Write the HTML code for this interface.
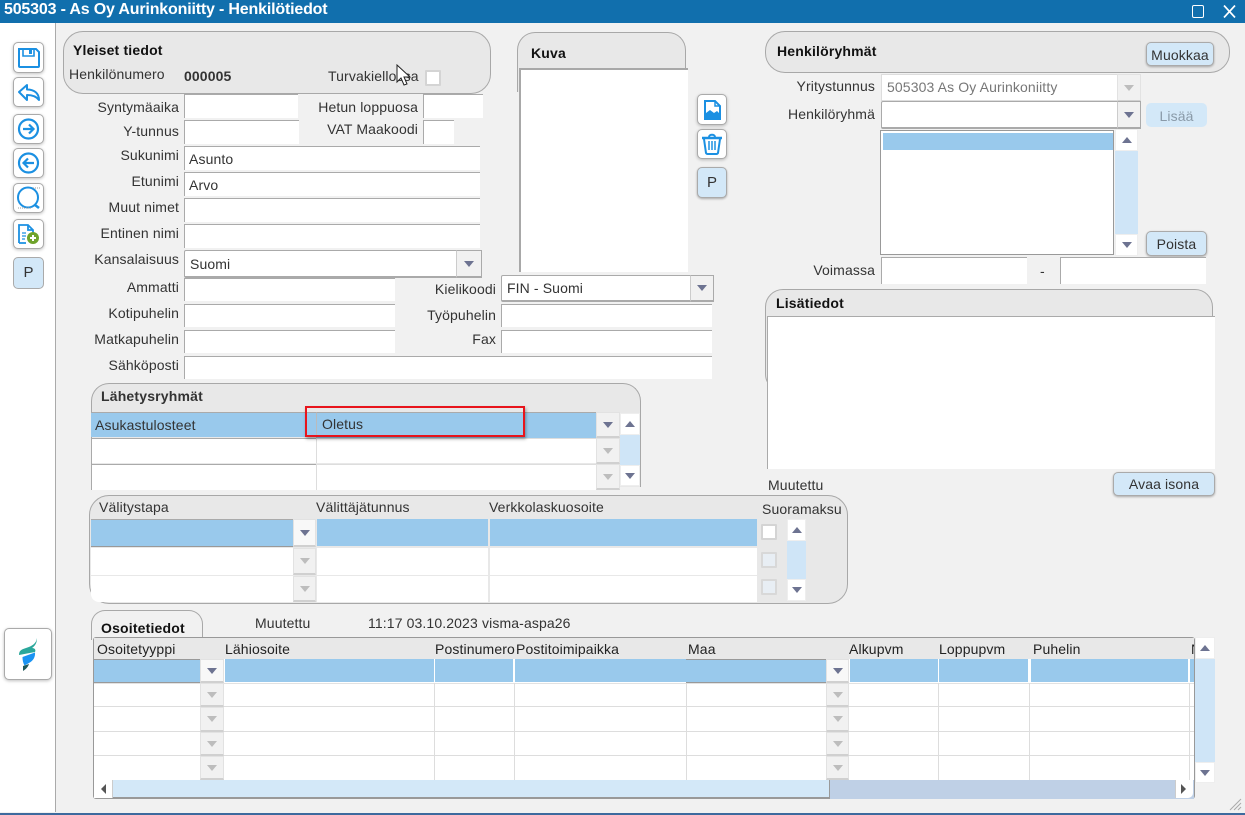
<!DOCTYPE html>
<html lang="fi"><head><meta charset="utf-8"><title>Henkilötiedot</title>
<style>
html,body{margin:0;padding:0;width:1245px;height:815px;overflow:hidden;background:#f1f1f1}
body{position:relative;font:14px/16px "Liberation Sans",Arial,sans-serif;color:#333;letter-spacing:.12px}
div,span.t,svg{position:absolute;box-sizing:border-box}
.t{white-space:nowrap;position:absolute}
.r{text-align:right}
.b{font-weight:bold;color:#111;letter-spacing:.18px}
.p{background:#e8e8e8;border:1px solid #a8a8a8}
.i{background:#fff;border-left:1px solid #aaa;border-top:1px solid #aaa}
.n{background:#fff;border-left:1px solid #ddd;border-top:1px solid #ddd}
.s{background:#99c9ec}
.btn{background:#fff;border:1px solid #aaa;border-radius:5px;box-shadow:0 1px 3px rgba(0,0,0,.25)}
.pb{background:#d3e8f8;border:1px solid #aaa;border-radius:5px;box-shadow:0 1px 2px rgba(0,0,0,.3);text-align:center;color:#333}
.dd{background:#f1f1f1;border:1px solid #e2e2e2;border-bottom:2px solid #d0d0d0}
.dn::after,.up::after,.dis::after{content:"";position:absolute;left:50%;top:50%;margin:-3px 0 0 -5px;border-left:5px solid transparent;border-right:5px solid transparent}
.dn::after{border-top:6px solid #6d7391}
.dis::after{border-top:6px solid #bdbdbd}
.up::after{border-bottom:6px solid #6d7391}
.sb{background:#fff;border:1px solid #eee}
.tr{background:#cfe5f7}
.ck{background:#fff;border:2px solid #d4d4d4;border-radius:1px}
.ck2{background:#e8eef4;border:2px solid #d8d8d8;border-radius:1px}
</style></head><body>

<!-- title bar -->
<div style="left:0;top:0;width:1245px;height:23px;background:#116fad"></div>
<span class="t" style="left:4px;top:1px;font-weight:bold;font-size:16px;line-height:18px;color:#fff;letter-spacing:-.18px">505303 - As Oy Aurinkoniitty - Henkilötiedot</span>
<div style="left:1192px;top:5px;width:12px;height:13px;border:1.500px solid #fff;border-radius:2px"></div>
<svg style="left:1223px;top:5px" width="13" height="13" viewBox="0 0 13 13"><path d="M1 .500L12 12.500M12 .500L1 12.500" stroke="#fff" stroke-width="1.700" fill="none"/></svg>

<!-- sidebar -->
<div style="left:0;top:23px;width:56px;height:789px;background:#fff;border-right:1px solid #aaa"></div>
<div style="left:0;top:813px;width:1245px;height:2px;background:#3d6a9e"></div>

<div class="btn" style="left:13px;top:42px;width:31px;height:31px"></div>
<svg style="left:13px;top:42px" width="31" height="31" viewBox="0 0 31 31" fill="none" stroke="#1b90e2" stroke-width="2"><path d="M6 7h17l3 3v14a1 1 0 0 1-1 1H7a1 1 0 0 1-1-1z"/><path d="M10 7v7h11V7" stroke-width="1.600"/><rect x="16" y="8" width="3" height="4" fill="#1b90e2" stroke="none"/></svg>
<div class="btn" style="left:13px;top:77px;width:31px;height:30px"></div>
<svg style="left:13px;top:77px" width="31" height="30" viewBox="0 0 31 30" fill="none" stroke="#1b90e2" stroke-width="2" stroke-linejoin="round"><path d="M6 15L14 8v4.500C21 12.500 26 16 26 23 23 19 19 18 14 18v5z"/></svg>
<div class="btn" style="left:13px;top:114px;width:31px;height:30px"></div>
<svg style="left:13px;top:114px" width="31" height="30" viewBox="0 0 31 30" fill="none" stroke="#1b90e2" stroke-width="2.200"><circle cx="15.500" cy="15" r="9.500"/><path d="M10 15h10M16 10.500l4.500 4.500-4.500 4.500"/></svg>
<div class="btn" style="left:13px;top:148px;width:31px;height:30px"></div>
<svg style="left:13px;top:148px" width="31" height="30" viewBox="0 0 31 30" fill="none" stroke="#1b90e2" stroke-width="2.200"><circle cx="15.500" cy="15" r="9.500"/><path d="M21 15H11M15 10.500L10.500 15l4.500 4.500"/></svg>
<div class="btn" style="left:13px;top:183px;width:31px;height:30px"></div>
<svg style="left:13px;top:183px" width="31" height="30" viewBox="0 0 31 30" fill="none" stroke="#1b90e2" stroke-width="2"><circle cx="15" cy="14.500" r="10"/><path d="M22 22l4 3" stroke-width="2.600"/><path d="M20 5h7M5 25h14" stroke="#999" stroke-width="1" stroke-dasharray="1 1"/></svg>
<div class="btn" style="left:13px;top:219px;width:31px;height:30px"></div>
<svg style="left:13px;top:219px" width="31" height="30" viewBox="0 0 31 30" fill="none"><path d="M6 24V6h9l5 5v3M6 24h7M15 6v5h5" stroke="#1b90e2" stroke-width="1.800"/><path d="M9 14h4M9 17h4M9 20h3" stroke="#1b90e2" stroke-width="1.200"/><circle cx="20" cy="19" r="6" fill="#6fa32b"/><path d="M17 19h6M20 16v6" stroke="#fff" stroke-width="2"/></svg>
<div class="pb" style="left:13px;top:257px;width:31px;height:32px;line-height:30px;font-size:15px;box-shadow:none">P</div>

<div class="btn" style="left:4px;top:628px;width:48px;height:52px"></div>
<svg style="left:4px;top:628px" width="48" height="52" viewBox="0 0 48 52"><path d="M33 10C32 16 28 18 22 20 18 21.500 15 22 15 27L31 24C32 22 31 20 28 20 31 18 33 15 33 10z" fill="#2aa79b"/><path d="M18.500 29L31 24.500C31.500 29 29 33 25 35L20.500 37.500C19 35 18.500 32 18.500 29z" fill="#1a93f2"/><path d="M19 38L25 36C24 39 22 41 19 43z" fill="#20585a"/></svg>

<!-- Yleiset tiedot -->
<div class="p" style="left:63px;top:31px;width:428px;height:63px;border-radius:20px"></div>
<span class="t b" style="left:73px;top:42px;font-size:14px">Yleiset tiedot</span>
<span class="t" style="left:69px;top:66px">Henkilönumero</span>
<span class="t" style="left:184px;top:68px;font-weight:bold">000005</span>
<span class="t" style="left:328px;top:68px">Turvakiellossa</span>
<div class="ck" style="left:425px;top:70px;width:16px;height:16px"></div>
<svg style="left:396px;top:64px" width="18" height="24" viewBox="0 0 18 24"><path d="M1 1v17l4-4 3 7 3-1-3-7h6z" fill="#fff" stroke="#222" stroke-width="1"/></svg>

<!-- left labels -->
<span class="t r" style="left:0;top:99px;width:179px">Syntymäaika</span>
<span class="t r" style="left:0;top:123px;width:179px">Y-tunnus</span>
<span class="t r" style="left:0;top:147px;width:179px">Sukunimi</span>
<span class="t r" style="left:0;top:173px;width:179px">Etunimi</span>
<span class="t r" style="left:0;top:199px;width:179px">Muut nimet</span>
<span class="t r" style="left:0;top:225px;width:179px">Entinen nimi</span>
<span class="t r" style="left:0;top:251px;width:179px">Kansalaisuus</span>
<span class="t r" style="left:0;top:279px;width:179px">Ammatti</span>
<span class="t r" style="left:0;top:305px;width:179px">Kotipuhelin</span>
<span class="t r" style="left:0;top:331px;width:179px">Matkapuhelin</span>
<span class="t r" style="left:0;top:357px;width:179px">Sähköposti</span>
<span class="t r" style="left:250px;top:99px;width:168px">Hetun loppuosa</span>
<span class="t r" style="left:250px;top:121px;width:168px">VAT Maakoodi</span>
<span class="t r" style="left:400px;top:281px;width:96px">Kielikoodi</span>
<span class="t r" style="left:400px;top:307px;width:96px">Työpuhelin</span>
<span class="t r" style="left:400px;top:331px;width:96px">Fax</span>

<!-- left fields -->
<div class="i" style="left:184px;top:94px;width:114px;height:24px"></div>
<div class="i" style="left:184px;top:120px;width:115px;height:24px"></div>
<div class="i" style="left:423px;top:94px;width:60px;height:24px"></div>
<div class="i" style="left:423px;top:120px;width:31px;height:24px"></div>
<div class="i" style="left:184px;top:146px;width:296px;height:24px"></div>
<span class="t" style="left:189px;top:151px">Asunto</span>
<div class="i" style="left:184px;top:172px;width:296px;height:24px"></div>
<span class="t" style="left:189px;top:177px">Arvo</span>
<div class="i" style="left:184px;top:198px;width:296px;height:24px"></div>
<div class="i" style="left:184px;top:224px;width:296px;height:24px"></div>
<div style="left:184px;top:250px;width:298px;height:28px;background:#fff;border:1px solid #aaa;border-bottom:2px solid #aaa;border-radius:2px"></div>
<span class="t" style="left:190px;top:256px">Suomi</span>
<div class="dd dn" style="left:456px;top:250px;width:26px;height:28px;border-color:#aaa;border-left-color:#ccc"></div>
<div class="i" style="left:184px;top:278px;width:211px;height:23px"></div>
<div class="i" style="left:184px;top:304px;width:211px;height:23px"></div>
<div class="i" style="left:184px;top:330px;width:211px;height:23px"></div>
<div class="i" style="left:184px;top:356px;width:528px;height:23px"></div>
<div style="left:501px;top:275px;width:213px;height:27px;background:#fff;border:1px solid #aaa;border-bottom:2px solid #aaa;border-radius:2px"></div>
<span class="t" style="left:507px;top:280px">FIN - Suomi</span>
<div class="dd dn" style="left:690px;top:275px;width:24px;height:27px;border-color:#aaa;border-left-color:#ccc"></div>
<div class="i" style="left:501px;top:304px;width:211px;height:23px"></div>
<div class="i" style="left:501px;top:330px;width:211px;height:23px"></div>

<!-- Kuva -->
<div class="p" style="left:517px;top:32px;width:169px;height:60px;border-radius:18px 18px 0 0;border-bottom:none"></div>
<span class="t b" style="left:531px;top:45px">Kuva</span>
<div style="left:519px;top:68px;width:169px;height:204px;background:#fff;border-left:2px solid #a8a8a8;border-top:2px solid #a8a8a8"></div>

<div class="btn" style="left:697px;top:94px;width:30px;height:31px"></div>
<svg style="left:697px;top:94px" width="30" height="31" viewBox="0 0 30 31" fill="none"><path d="M8 7h10l5 5v13H8z" stroke="#1b90e2" stroke-width="2"/><path d="M18 7v5h5" stroke="#1b90e2" stroke-width="1.500"/><path d="M9 24v-5l4-3 4 3 3-2 2 2v5z" fill="#1b90e2"/></svg>
<div class="btn" style="left:697px;top:129px;width:30px;height:30px"></div>
<svg style="left:697px;top:129px" width="30" height="30" viewBox="0 0 30 30" fill="none" stroke="#1b90e2" stroke-width="2"><path d="M5 9h20" stroke-width="2.500"/><path d="M12 8c0-3 6-3 6 0"/><path d="M7 10l2 14a2 2 0 0 0 2 1h8a2 2 0 0 0 2-1l2-14"/><path d="M12 12v9M15 12v9M18 12v9" stroke-width="1.500"/></svg>
<div class="pb" style="left:697px;top:167px;width:30px;height:31px;line-height:30px;font-size:15px">P</div>

<!-- Henkilöryhmät -->
<div class="p" style="left:765px;top:31px;width:465px;height:42px;border-radius:20px"></div>
<span class="t b" style="left:777px;top:43px">Henkilöryhmät</span>
<div class="pb" style="left:1146px;top:42px;width:68px;height:24px;line-height:24px">Muokkaa</div>
<span class="t r" style="left:760px;top:78px;width:115px">Yritystunnus</span>
<span class="t r" style="left:760px;top:106px;width:115px">Henkilöryhmä</span>
<span class="t r" style="left:760px;top:262px;width:115px">Voimassa</span>
<div style="left:881px;top:74px;width:260px;height:27px;background:#fff;border:1px solid #ddd"></div>
<span class="t" style="left:887px;top:79px;color:#777">505303 As Oy Aurinkoniitty</span>
<div class="dd dis" style="left:1117px;top:74px;width:24px;height:27px;border-bottom-width:1px"></div>
<div style="left:881px;top:101px;width:260px;height:28px;background:#fff;border:1px solid #aaa;border-bottom:2px solid #aaa;border-radius:2px"></div>
<div class="dd dn" style="left:1117px;top:101px;width:24px;height:28px;border-color:#aaa;border-left-color:#ccc"></div>
<div class="pb" style="left:1146px;top:103px;width:61px;height:24px;line-height:24px;border-color:#d3e8f8;box-shadow:none;color:#8a9aa8">Lisää</div>
<div style="left:880px;top:130px;width:234px;height:125px;background:#fff;border:1px solid #999"></div>
<div class="s" style="left:883px;top:133px;width:230px;height:17px"></div>
<div class="sb up" style="left:1115px;top:129px;width:23px;height:22px"></div>
<div class="tr" style="left:1115px;top:151px;width:23px;height:83px"></div>
<div class="sb dn" style="left:1115px;top:234px;width:23px;height:22px"></div>
<div class="pb" style="left:1146px;top:231px;width:61px;height:25px;line-height:24px">Poista</div>
<div class="i" style="left:881px;top:257px;width:146px;height:27px"></div>
<span class="t" style="left:1040px;top:263px">-</span>
<div class="i" style="left:1060px;top:257px;width:146px;height:27px"></div>

<!-- Lisätiedot -->
<div class="p" style="left:765px;top:289px;width:448px;height:103px;border-radius:18px 18px 0 18px"></div>
<span class="t b" style="left:776px;top:295px">Lisätiedot</span>
<div style="left:767px;top:316px;width:448px;height:153px;background:#fff;border-left:1px solid #aaa;border-top:1px solid #aaa"></div>
<div class="pb" style="left:1113px;top:472px;width:102px;height:24px;line-height:23px">Avaa isona</div>
<span class="t" style="left:768px;top:477px">Muutettu</span>

<!-- Lähetysryhmät -->
<div class="p" style="left:91px;top:383px;width:550px;height:104px;border-radius:18px 18px 0 0;border-bottom:none"></div>
<span class="t" style="left:101px;top:388px;font-weight:bold;color:#333;letter-spacing:.18px">Lähetysryhmät</span>
<div class="s" style="left:91px;top:412px;width:225px;height:25px;border-top:1px solid #aaa"></div>
<span class="t" style="left:95px;top:417px">Asukastulosteet</span>
<div class="s" style="left:316px;top:412px;width:280px;height:26px;border-left:1px solid #bbb;border-top:1px solid #aaa"></div>
<div class="dd dn" style="left:596px;top:412px;width:24px;height:26px;margin:0"></div>
<div class="i" style="left:91px;top:438px;width:225px;height:25px"></div>
<div class="i" style="left:91px;top:464px;width:225px;height:26px"></div>
<div class="n" style="left:316px;top:438px;width:280px;height:25px"></div>
<div class="n" style="left:316px;top:464px;width:280px;height:26px"></div>
<div class="dd dis" style="left:596px;top:438px;width:24px;height:26px"></div>
<div class="dd dis" style="left:596px;top:464px;width:24px;height:26px"></div>
<div class="sb up" style="left:620px;top:413px;width:20px;height:22px"></div>
<div class="tr" style="left:620px;top:435px;width:20px;height:30px"></div>
<div class="sb dn" style="left:620px;top:465px;width:20px;height:21px"></div>
<span class="t" style="left:322px;top:416px">Oletus</span>
<div style="left:305px;top:406px;width:220px;height:31px;border:2px solid #e8141c;box-shadow:1px 2px 3px rgba(0,0,0,.35)"></div>

<!-- Välitystapa -->
<div class="p" style="left:89px;top:495px;width:759px;height:109px;border-radius:20px"></div>
<span class="t" style="left:99px;top:499px">Välitystapa</span>
<span class="t" style="left:316px;top:499px">Välittäjätunnus</span>
<span class="t" style="left:489px;top:499px">Verkkolaskuosoite</span>
<span class="t" style="left:762px;top:501px">Suoramaksu</span>
<div class="s" style="left:91px;top:519px;width:202px;height:28px;border-top:1px solid #aaa;border-bottom:1px solid #999"></div>
<div class="dd dn" style="left:293px;top:519px;width:23px;height:28px;background:#f8f8f8"></div>
<div class="s" style="left:317px;top:519px;width:171px;height:27px"></div>
<div class="s" style="left:490px;top:519px;width:267px;height:27px"></div>
<div style="left:91px;top:548px;width:202px;height:27px;background:#fff"></div>
<div style="left:91px;top:576px;width:202px;height:26px;background:#fff;border-bottom-left-radius:8px"></div>
<div class="dd dis" style="left:293px;top:548px;width:23px;height:27px"></div>
<div class="dd dis" style="left:293px;top:576px;width:23px;height:26px"></div>
<div style="left:317px;top:548px;width:171px;height:27px;background:#fff"></div>
<div style="left:317px;top:576px;width:171px;height:26px;background:#fff"></div>
<div style="left:490px;top:548px;width:267px;height:27px;background:#fff"></div>
<div style="left:490px;top:576px;width:267px;height:26px;background:#fff"></div>
<div class="ck" style="left:761px;top:524px;width:16px;height:16px"></div>
<div class="ck2" style="left:761px;top:552px;width:16px;height:16px"></div>
<div class="ck2" style="left:761px;top:579px;width:16px;height:16px"></div>
<div class="sb up" style="left:787px;top:519px;width:19px;height:22px"></div>
<div class="tr" style="left:787px;top:541px;width:19px;height:38px"></div>
<div class="sb dn" style="left:787px;top:579px;width:19px;height:22px"></div>

<!-- Osoitetiedot -->
<div class="p" style="left:91px;top:610px;width:112px;height:30px;border-radius:14px 14px 0 0;background:#f1f1f1;border-bottom:none"></div>
<span class="t b" style="left:101px;top:620px">Osoitetiedot</span>
<span class="t" style="left:255px;top:615px">Muutettu</span>
<span class="t" style="left:368px;top:615px;width:109px;overflow:hidden;display:block">11:17 03.10.2023</span>
<span class="t" style="left:482px;top:615px">visma-aspa26</span>

<div style="left:93px;top:637px;width:1102px;height:162px;background:#fff;border:1px solid #999;border-radius:3px"></div>
<div style="left:94px;top:638px;width:1100px;height:21px;background:#e8e8e8"></div>
<div style="left:94px;top:638px;width:1100px;height:21px;overflow:hidden;color:#222">
<span class="t" style="left:3px;top:3px">Osoitetyyppi</span>
<span class="t" style="left:131px;top:3px">Lähiosoite</span>
<span class="t" style="left:341px;top:3px">Postinumero</span>
<span class="t" style="left:422px;top:3px">Postitoimipaikka</span>
<span class="t" style="left:594px;top:3px">Maa</span>
<span class="t" style="left:755px;top:3px">Alkupvm</span>
<span class="t" style="left:845px;top:3px">Loppupvm</span>
<span class="t" style="left:939px;top:3px">Puhelin</span>
<span class="t" style="left:1097px;top:3px">N</span>
</div>

<!-- row 1 selected -->
<div class="s" style="left:94px;top:659px;width:106px;height:24px;border-top:1px solid #999;border-bottom:1px solid #999"></div>
<div class="dd dn" style="left:200px;top:659px;width:24px;height:24px;background:#f8f8f8"></div>
<div class="s" style="left:225px;top:659px;width:209px;height:23px"></div>
<div class="s" style="left:435px;top:659px;width:78px;height:23px"></div>
<div class="s" style="left:515px;top:659px;width:171px;height:23px"></div>
<div class="s" style="left:686px;top:659px;width:140px;height:24px;border-top:1px solid #999;border-bottom:1px solid #999"></div>
<div class="dd dn" style="left:826px;top:659px;width:23px;height:24px;background:#f8f8f8"></div>
<div class="s" style="left:850px;top:659px;width:88px;height:23px"></div>
<div class="s" style="left:939px;top:659px;width:89px;height:23px"></div>
<div class="s" style="left:1031px;top:659px;width:157px;height:23px"></div>
<div class="s" style="left:1190px;top:659px;width:4px;height:23px"></div>

<!-- grid separators -->
<div style="left:94px;top:706px;width:1100px;height:1px;background:#ddd"></div>
<div style="left:94px;top:731px;width:1100px;height:1px;background:#ddd"></div>
<div style="left:94px;top:755px;width:1100px;height:1px;background:#ddd"></div>
<div style="left:94px;top:683px;width:1100px;height:1px;background:#e2e2e2"></div>
<div style="left:434px;top:683px;width:1px;height:97px;background:#ddd"></div>
<div style="left:514px;top:683px;width:1px;height:97px;background:#ddd"></div>
<div style="left:686px;top:683px;width:1px;height:97px;background:#ddd"></div>
<div style="left:938px;top:683px;width:1px;height:97px;background:#ddd"></div>
<div style="left:1029px;top:683px;width:1px;height:97px;background:#ddd"></div>
<div style="left:1189px;top:683px;width:1px;height:97px;background:#ddd"></div>

<div class="dd dis" style="left:200px;top:683px;width:24px;height:24px"></div>
<div class="dd dis" style="left:200px;top:707px;width:24px;height:25px"></div>
<div class="dd dis" style="left:200px;top:732px;width:24px;height:24px"></div>
<div class="dd dis" style="left:200px;top:756px;width:24px;height:24px"></div>
<div class="dd dis" style="left:826px;top:683px;width:23px;height:24px"></div>
<div class="dd dis" style="left:826px;top:707px;width:23px;height:25px"></div>
<div class="dd dis" style="left:826px;top:732px;width:23px;height:24px"></div>
<div class="dd dis" style="left:826px;top:756px;width:23px;height:24px"></div>

<!-- h scroll -->
<div style="left:94px;top:780px;width:736px;height:18px;background:#d3e8f8;border-bottom:1px solid #999;border-right:1px solid #999"></div>
<div style="left:830px;top:780px;width:364px;height:19px;background:#bfd0e6"></div>
<div style="left:94px;top:780px;width:19px;height:18px;background:#fff;border-right:1px solid #ccc"></div>
<div style="left:101px;top:784px;width:0;height:0;border-top:5px solid transparent;border-bottom:5px solid transparent;border-right:5px solid #555"></div>
<div style="left:1175px;top:780px;width:18px;height:18px;background:#fff;border-left:1px solid #ccc;border-radius:0 0 5px 0"></div>
<div style="left:1181px;top:784px;width:0;height:0;border-top:5px solid transparent;border-bottom:5px solid transparent;border-left:5px solid #555"></div>

<!-- v scroll -->
<div class="sb up" style="left:1195px;top:637px;width:20px;height:22px"></div>
<div class="tr" style="left:1195px;top:659px;width:20px;height:103px"></div>
<div class="sb dn" style="left:1195px;top:762px;width:20px;height:21px"></div>

<svg style="left:1229px;top:798px" width="13" height="13" viewBox="0 0 13 13" fill="none" stroke="#aaa" stroke-width="1"><path d="M1 12L12 1M5 12l7-7M9 12l3-3"/></svg>
</body></html>
